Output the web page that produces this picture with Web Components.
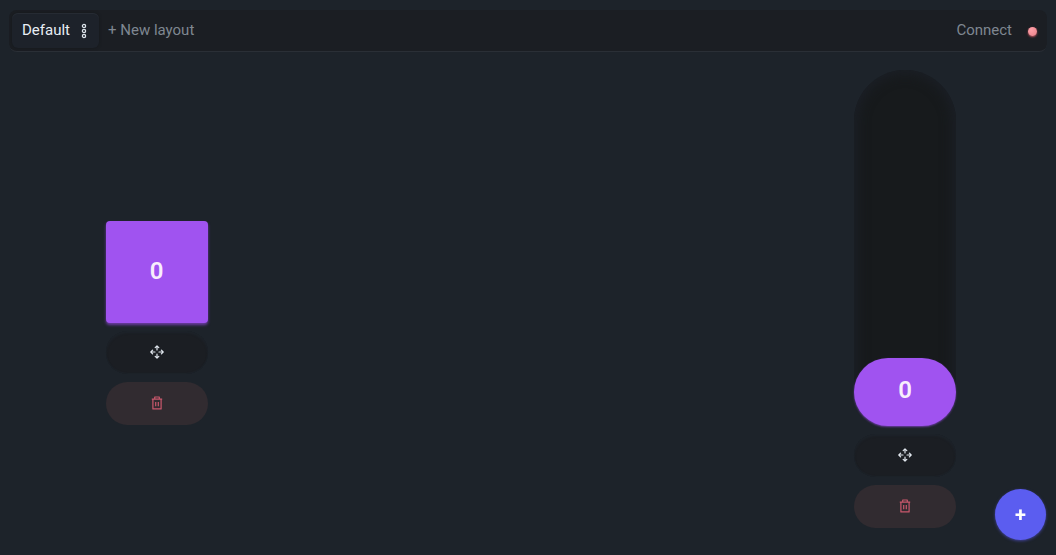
<!DOCTYPE html>
<html lang="en">
<head>
<meta charset="utf-8">
<meta name="viewport" content="width=device-width, initial-scale=1">
<title>Controller layout</title>
<style>
  :root {
    --base: #1d232a;
    --sunken: #1b1e23;
    --track: #171a1c;
    --line: #2a2f36;
    --text: #e8eef5;
    --muted: #7f8791;
    --accent: #a053f0;
    --primary: #5b5df0;
    --danger: #c9586c;
    --danger-soft: #312b30;
  }
  html, body { height: 100%; }
  body {
    margin: 0;
    background: var(--base);
    color: var(--text);
    font: 15px/20px Roboto, sans-serif;
  }
</style>
</head>
<body>
<control-app></control-app>
<script>
class BaseElement extends HTMLElement {
  connectedCallback() {
    if (!this.shadowRoot) this.attachShadow({ mode: 'open' }).innerHTML = this.render();
  }
}

customElements.define('layout-bar', class extends BaseElement {
  render() {
    return `
    <style>
      :host { display: block; padding: 10px 9px 0; }
      nav {
        display: flex; align-items: center; box-sizing: border-box;
        height: 42px; padding: 3px; border-radius: 8px;
        background: var(--sunken); border-bottom: 1px solid var(--line);
      }
      button { font: inherit; border: 0; padding: 0 0 2px; background: none; color: var(--muted); cursor: pointer; }
      .tab {
        display: flex; align-items: center; height: 35px; border-radius: 6px;
        background: #1d222a; box-shadow: inset 0 1px #262b33, 0 0 3px #15181c;
      }
      .tab button { color: var(--text); height: 35px; }
      .name { padding-left: 10px; }
      .more { display: flex; align-items: center; padding: 0 9px 0 8px; }
      .new { padding: 0 9px 2px; }
      .connect { display: flex; align-items: center; gap: 16px; margin-left: auto; padding-right: 7px; }
      .status {
        width: 9px; height: 9px; margin-top: 3px; border-radius: 50%;
        background: radial-gradient(circle at 35% 30%, #ffa0a8, #e87f88);
        box-shadow: 0 1px 2px #b84e59;
      }
    </style>
    <nav aria-label="Layouts">
      <div class="tab">
        <button class="name">Default</button>
        <button class="more" aria-label="Layout options">
          <svg width="12" height="16" viewBox="0 0 12 16" fill="none" stroke="#dce3ea" stroke-width="1.3">
            <circle cx="6" cy="3" r="1.6"/><circle cx="6" cy="8" r="1.6"/><circle cx="6" cy="13" r="1.6"/>
          </svg>
        </button>
      </div>
      <button class="new">+ New layout</button>
      <button class="connect">Connect <span class="status"></span></button>
    </nav>`;
  }
});

customElements.define('control-widget', class extends BaseElement {
  render() {
    return `
    <style>
      :host { display: flex; flex-direction: column; gap: 8px; width: 102px; }
      button {
        display: flex; align-items: center; justify-content: center; box-sizing: border-box;
        height: 43px; padding: 0 0 1px; border: 0; border-radius: 22px; cursor: pointer;
      }
      .move { background: var(--sunken); box-shadow: inset 0 2px 2px var(--base), inset 0 -1px 1px var(--base); }
      .remove { background: var(--danger-soft); }
    </style>
    <slot></slot>
    <button class="move" aria-label="Move">
      <svg width="14" height="14" viewBox="0 0 14 14" fill="none" stroke="#e1e7ee" stroke-width="1.2" stroke-linecap="round" stroke-linejoin="round">
        <path d="M7 5V1M5.2 2.6 7 .8l1.8 1.8M7 9v4M5.2 11.4 7 13.2l1.8-1.8M5 7H1M2.6 5.2.8 7l1.8 1.8M9 7h4M11.4 5.2 13.2 7l-1.8 1.8"/>
      </svg>
    </button>
    <button class="remove" aria-label="Delete">
      <svg width="12" height="14" viewBox="0 0 12 14" fill="none" stroke="#c9586c" stroke-width="1.2" stroke-linejoin="round">
        <path d="M.8 3.2h10.4M3.7 3V1h4.6v2M1.9 3.4v9.5h8.2V3.4M4.7 6v4.2M7.3 6v4.2"/>
      </svg>
    </button>`;
  }
});

customElements.define('push-control', class extends BaseElement {
  render() {
    return `
    <style>
      :host { display: block; }
      button {
        display: block; width: 100%; aspect-ratio: 1; padding: 0 0 2px; border: 0; border-radius: 4px;
        background: var(--accent); color: #f8eefc; font: 600 24px/28px Roboto, sans-serif;
        box-shadow: 0 2px 3px #6c3da4; cursor: pointer;
      }
    </style>
    <button><slot></slot></button>`;
  }
});

customElements.define('slide-control', class extends BaseElement {
  render() {
    return `
    <style>
      :host { display: block; position: relative; height: 356px; border-radius: 51px 51px 34px 34px; background: var(--track); box-shadow: inset 0 0 12px 4px #1b1f26; }
      input {
        appearance: none; display: block; width: 100%; height: 100%; margin: 0;
        writing-mode: vertical-lr; direction: rtl; background: none; cursor: pointer;
      }
      input::-webkit-slider-thumb {
        appearance: none; width: 102px; height: 68px; border-radius: 34px;
        background: var(--accent); box-shadow: 0 1px 2px #6c3da4;
      }
      output {
        position: absolute; inset: auto 0 0; height: 64px; padding-bottom: 4px;
        display: flex; align-items: center; justify-content: center;
        color: #f8eefc; font: 600 24px/28px Roboto, sans-serif; pointer-events: none;
      }
    </style>
    <input id="level" type="range" min="0" max="100" value="0" aria-label="Level">
    <output for="level"><slot></slot></output>`;
  }
});

customElements.define('add-button', class extends BaseElement {
  render() {
    return `
    <style>
      :host { display: block; }
      button {
        display: flex; align-items: center; justify-content: center;
        width: 51px; height: 51px; padding: 0; border: 0; border-radius: 50%;
        background: var(--primary); color: #fff; font: 700 20px/24px Roboto, sans-serif;
        box-shadow: 0 1px 3px #41439c; cursor: pointer;
      }
    </style>
    <button aria-label="Add control">+</button>`;
  }
});

customElements.define('control-app', class extends BaseElement {
  render() {
    return `
    <style>
      :host { display: flex; flex-direction: column; min-height: 100%; }
      main { position: relative; flex: 1; min-height: 480px; }
      control-widget { position: absolute; }
      .push { left: 10%; top: 169px; }
      .slide { right: 100px; top: 18px; }
      add-button { position: fixed; right: 10px; bottom: 15px; }
    </style>
    <layout-bar></layout-bar>
    <main>
      <control-widget class="push"><push-control>0</push-control></control-widget>
      <control-widget class="slide"><slide-control>0</slide-control></control-widget>
    </main>
    <add-button></add-button>`;
  }
});
</script>
</body>
</html>
